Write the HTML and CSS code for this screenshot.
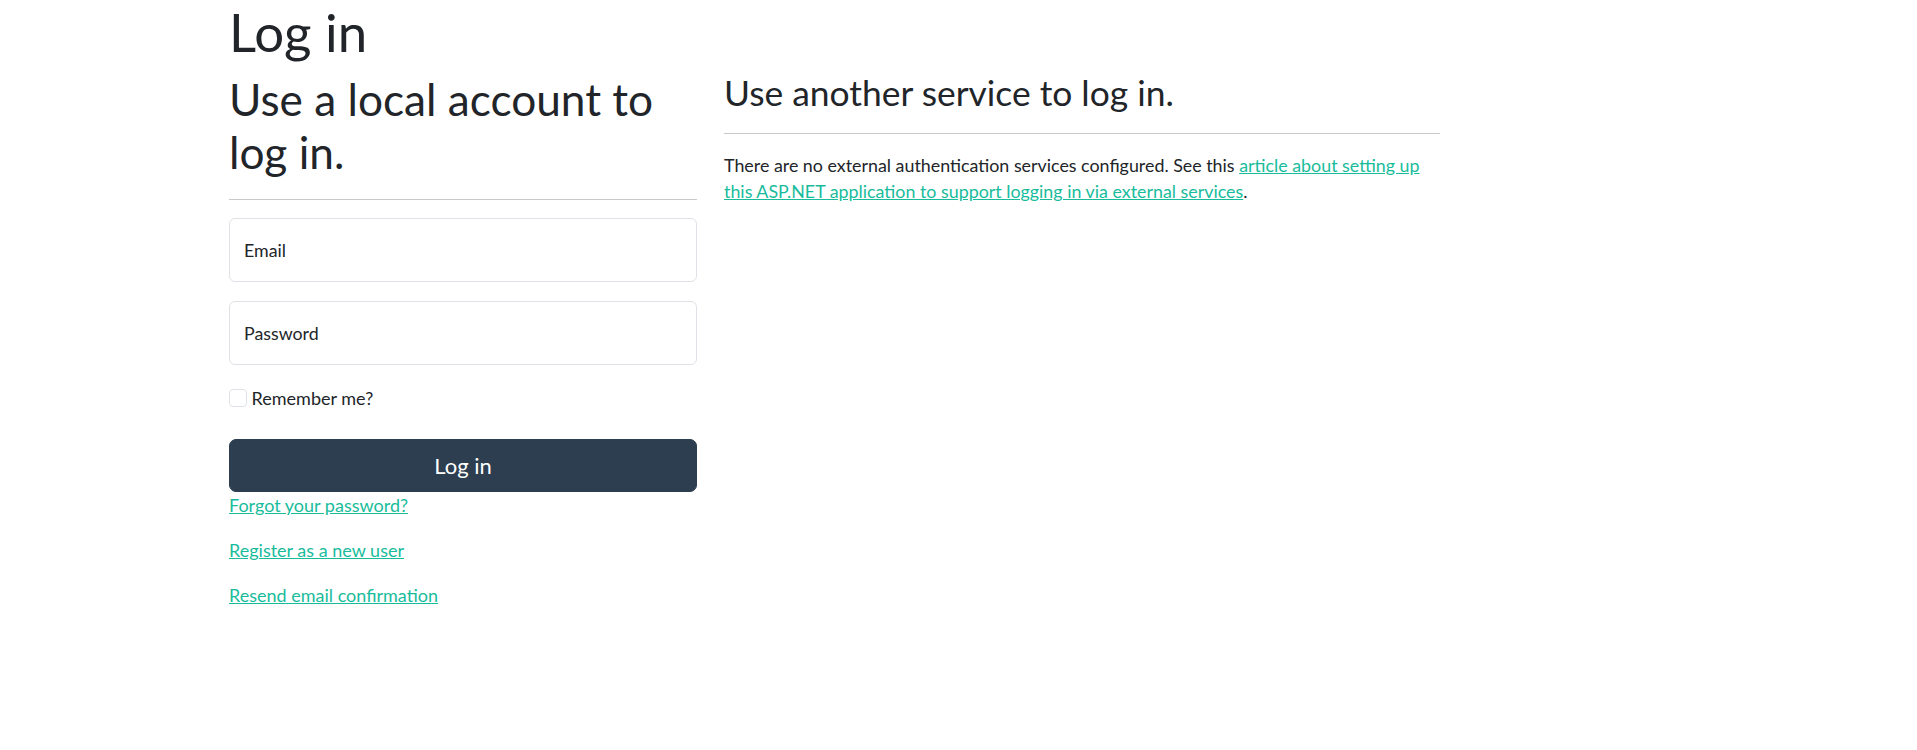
FILE: index.html
```
<!DOCTYPE html>
<html lang="en">
<head>
<meta charset="utf-8">
<title>Log in</title>
<link rel="stylesheet" href="styles.css">
</head>
<body>
<main class="page">
  <h1 class="title">Log in</h1>
  <div class="row">
    <section class="col-local">
      <form class="login-form" onsubmit="return false">
        <h2 class="section-heading">Use a local account to log in.</h2>
        <hr class="rule">
        <div class="field">
          <input class="control" type="email" placeholder="Email" aria-label="Email">
        </div>
        <div class="field">
          <input class="control" type="password" placeholder="Password" aria-label="Password">
        </div>
        <div class="check-row">
          <label class="check-label"><input class="check" type="checkbox"> Remember me?</label>
        </div>
        <div>
          <button class="btn-primary" type="submit">Log in</button>
        </div>
        <div class="links">
          <p class="link-p"><a href="#" class="link">Forgot your password?</a></p>
          <p class="link-p"><a href="#" class="link">Register as a new user</a></p>
          <p class="link-p"><a href="#" class="link">Resend email confirmation</a></p>
        </div>
      </form>
    </section>
    <section class="col-external">
      <h3 class="sub-heading">Use another service to log in.</h3>
      <hr class="rule rule-ext">
      <p class="info">There are no external authentication services configured. See this <a href="#" class="link">article about setting up this ASP.NET application to support logging in via external services</a>.</p>
    </section>
  </div>
</main>
</body>
</html>
```
FILE: styles.css
```
html, body {
  margin: 0;
  padding: 0;
  background: #fff;
}
body {
  font-family: Lato, "Open Sans", sans-serif;
  font-size: 18px;
  line-height: 26.4px;
  color: #212529;
}
.page {
  padding-left: 229px;
  width: 1211px;
}
.title {
  margin: 0 0 8.8px;
  font-size: 52.8px;
  font-weight: 400;
  line-height: 1.2;
}
.row {
  display: flex;
  gap: 27px;
  align-items: flex-start;
}
.col-local {
  width: 468px;
  flex: none;
}
.col-external {
  width: 716px;
  flex: none;
}
.login-form {
  margin: 0;
}
.section-heading {
  margin: 0;
  padding-top: 1px;
  font-size: 44.2px;
  font-weight: 400;
  line-height: 52.8px;
}
.sub-heading {
  margin: 0;
  font-size: 35.4px;
  font-weight: 400;
  line-height: 42.2px;
}
.rule {
  margin: 20px 0 18px;
  border: 0;
  border-top: 1px solid #c8c9ca;
  height: 0;
}
.rule-ext {
  margin-top: 18.5px;
}
.field {
  margin-bottom: 19px;
}
.control {
  display: block;
  box-sizing: border-box;
  width: 100%;
  height: 64px;
  padding: 0 14px;
  border: 1px solid #dee2e6;
  border-radius: 6px;
  font-family: inherit;
  font-size: 17.8px;
  color: #212529;
  background: #fff;
  outline: none;
}
.control::placeholder {
  color: #212529;
  opacity: 1;
}
.check-row {
  margin: 0 0 26px;
  padding-top: 1px;
}
.check-label {
  display: inline-flex;
  align-items: center;
  gap: 5px;
}
.check {
  appearance: none;
  -webkit-appearance: none;
  margin: 0;
  width: 17.6px;
  height: 17.6px;
  border: 1px solid #dee2e6;
  border-radius: 4px;
  background: #fff;
  flex: none;
}
.btn-primary {
  display: block;
  box-sizing: border-box;
  width: 100%;
  height: 53px;
  padding: 0 17.6px;
  border: 1px solid #2c3e50;
  border-radius: 7px;
  background: #2c3e50;
  color: #fff;
  font-family: inherit;
  font-size: 22px;
  line-height: 1.5;
  cursor: pointer;
}
.links {
  margin: 0;
}
.link-p {
  margin: 0 0 18.6px;
}
.link {
  color: #18bc9c;
  text-decoration: underline;
}
.info {
  margin: 1px 0 0;
  font-size: 17.85px;
}
```
